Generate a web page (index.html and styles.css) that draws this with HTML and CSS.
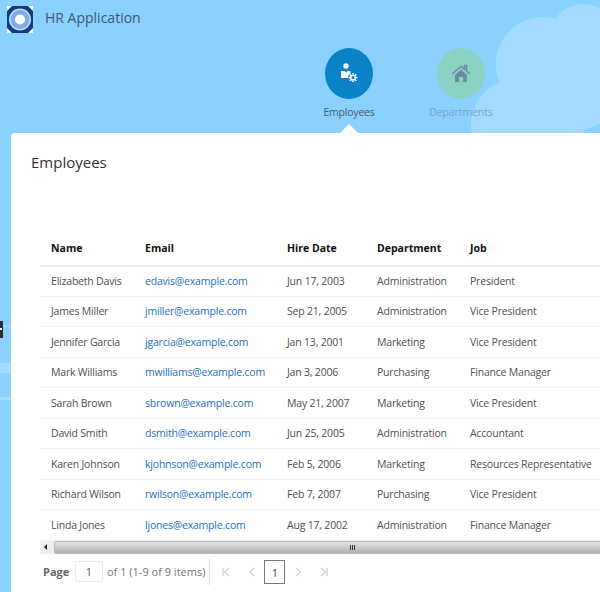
FILE: index.html
```html
<!DOCTYPE html>
<html lang="en">
<head>
<meta charset="utf-8">
<title>HR Application</title>
<link rel="stylesheet" href="styles.css">
</head>
<body>
<div class="sky">
  <svg class="clouds" width="600" height="592" viewBox="0 0 600 592" aria-hidden="true">
    <circle cx="543" cy="64" r="47" fill="#a5daff"/>
    <circle cx="583" cy="37" r="33" fill="#a5daff"/>
    <circle cx="575" cy="80" r="50" fill="#a5daff"/>
    <circle cx="517" cy="125" r="46" fill="#a5daff"/>
    <circle cx="550" cy="110" r="40" fill="#a5daff"/>
    <rect x="0" y="325" width="11" height="2" fill="#a0d9ff"/>
    <rect x="0" y="363" width="11" height="10" fill="#a5daff"/>
    <rect x="0" y="397" width="11" height="3" fill="#a5daff"/>
  </svg>
  <span class="handle"></span>
  <header class="brand">
    <svg class="logo" width="26" height="27" viewBox="0 0 26 27" aria-hidden="true">
      <rect width="26" height="27" fill="#fff"/>
      <path d="M5 0H21L26 5V22L21 27H5L0 22V5Z" fill="#0b3f82"/>
      <circle cx="13" cy="13.5" r="12" fill="#0b3f82"/>
      <circle cx="13" cy="13.5" r="11" fill="#c5d8ee"/>
      <circle cx="13" cy="13.5" r="9.5" fill="#7eaee8"/>
      <circle cx="13" cy="13.5" r="5" fill="#fff"/>
    </svg>
    <span class="brand-name">HR Application</span>
  </header>
  <nav class="tabs">
    <a class="tab tab-active">
      <span class="disc disc-blue">
        <svg width="22" height="22" viewBox="0 0 22 22" aria-hidden="true">
          <circle cx="8" cy="3" r="2.7" fill="#fff"/>
          <path d="M3 8H6.5L8 9.5L9.5 8H12.5V10.5A4.5 4.5 0 0 0 10 15H3Z" fill="#fff"/>
          <g fill="none" stroke="#fff">
            <circle cx="15" cy="14.5" r="2.3" stroke-width="1.6"/>
            <path d="M15 10V11.5M15 17.5V19M10.5 14.5H12M18 14.5H19.5M11.8 11.3L12.9 12.4M17.1 16.6L18.2 17.7M18.2 11.3L17.1 12.4M12.9 16.6L11.8 17.7" stroke-width="1.5"/>
          </g>
        </svg>
      </span>
      <span class="tab-label">Employees</span>
    </a>
    <a class="tab tab-muted">
      <span class="disc disc-green">
        <svg width="20" height="20" viewBox="0 0 20 20" aria-hidden="true">
          <path d="M1 10L10 2.5L13.5 5.4V1.5H15.5V7L19 10" fill="none" stroke="#6e8ea8" stroke-width="1.6"/>
          <path d="M4 11L10 5.5L16 11V18H12V13H8V18H4Z" fill="#6e8ea8"/>
        </svg>
      </span>
      <span class="tab-label">Departments</span>
    </a>
  </nav>
  <main class="card">
    <h1 class="title">Employees</h1>
    <table class="grid">
      <thead>
        <tr><th>Name</th><th>Email</th><th>Hire Date</th><th>Department</th><th>Job</th></tr>
      </thead>
      <tbody>
        <tr><td>Elizabeth Davis</td><td><a>edavis@example.com</a></td><td>Jun 17, 2003</td><td>Administration</td><td>President</td></tr>
        <tr><td>James Miller</td><td><a>jmiller@example.com</a></td><td>Sep 21, 2005</td><td>Administration</td><td>Vice President</td></tr>
        <tr><td>Jennifer Garcia</td><td><a>jgarcia@example.com</a></td><td>Jan 13, 2001</td><td>Marketing</td><td>Vice President</td></tr>
        <tr><td>Mark Williams</td><td><a>mwilliams@example.com</a></td><td>Jan 3, 2006</td><td>Purchasing</td><td>Finance Manager</td></tr>
        <tr><td>Sarah Brown</td><td><a>sbrown@example.com</a></td><td>May 21, 2007</td><td>Marketing</td><td>Vice President</td></tr>
        <tr><td>David Smith</td><td><a>dsmith@example.com</a></td><td>Jun 25, 2005</td><td>Administration</td><td>Accountant</td></tr>
        <tr><td>Karen Johnson</td><td><a>kjohnson@example.com</a></td><td>Feb 5, 2006</td><td>Marketing</td><td>Resources Representative</td></tr>
        <tr><td>Richard Wilson</td><td><a>rwilson@example.com</a></td><td>Feb 7, 2007</td><td>Purchasing</td><td>Vice President</td></tr>
        <tr><td>Linda Jones</td><td><a>ljones@example.com</a></td><td>Aug 17, 2002</td><td>Administration</td><td>Finance Manager</td></tr>
      </tbody>
    </table>
    <div class="scrollbar">
      <span class="arrow"></span>
      <span class="thumb"><span class="grip"></span></span>
    </div>
    <div class="pager">
      <b class="page-label">Page</b>
      <span class="page-input">1</span>
      <span class="page-of">of 1 (1-9 of 9 items)</span>
      <span class="pager-nav">
        <svg class="chev" width="10" height="10" viewBox="0 0 10 10" aria-hidden="true"><path d="M2 1V9M8 1L3.5 5L8 9" /></svg>
        <svg class="chev" width="10" height="10" viewBox="0 0 10 10" aria-hidden="true"><path d="M7 1L2.5 5L7 9" /></svg>
        <span class="page-current">1</span>
        <svg class="chev" width="10" height="10" viewBox="0 0 10 10" aria-hidden="true"><path d="M3 1L7.5 5L3 9" /></svg>
        <svg class="chev" width="10" height="10" viewBox="0 0 10 10" aria-hidden="true"><path d="M8 1V9M2 1L6.5 5L2 9" /></svg>
      </span>
    </div>
  </main>
</div>
</body>
</html>
```
FILE: styles.css
```css
* { box-sizing: border-box; }
html, body { margin: 0; height: 100%; overflow: hidden; }
body { font-family: "Open Sans", "Noto Sans", sans-serif; color: #505050; }
.sky { position: relative; width: 600px; height: 592px; background: #8ad1ff; overflow: hidden; display: flex; flex-direction: column; }
.clouds { position: absolute; left: 0; top: 0; }
.handle { position: absolute; left: 0; top: 321px; width: 3px; height: 17px; background: #2b2f33; }
.handle::after { content: ""; position: absolute; left: 0; top: 7px; width: 2px; height: 2px; background: #fff; }
.brand { position: relative; display: flex; align-items: center; height: 32px; margin-top: 6px; padding-left: 7px; gap: 12px; }
.logo { display: block; margin-bottom: 5px; }
.brand-name { font-size: 14px; color: #45566a; margin-bottom: 9px; }
.tabs { position: relative; display: flex; height: 85px; padding-left: 316px; gap: 46px; margin-top: 10px; }
.tab { width: 66px; display: flex; flex-direction: column; align-items: center; position: relative; }
.tab-active::after { content: ""; position: absolute; left: 24px; bottom: 0; border: 9px solid transparent; border-top: 0; border-bottom-color: #fff; }
.disc { width: 48px; height: 51px; border-radius: 50%; display: flex; align-items: center; justify-content: center; }
.disc-blue { background: #0b82c8; }
.disc-green { background: #8cd2c3; }
.tab-label { margin-top: 6px; font-size: 10.5px; letter-spacing: -0.2px; white-space: nowrap; color: #4a5d6e; }
.tab-muted .tab-label { color: #74a3c4; letter-spacing: -0.1px; }
.card { position: relative; flex: 1; margin-left: 11px; background: #fff; border-radius: 4px 0 0 0; padding: 18px 0 0 29px; overflow: hidden; }
.title { margin: 0 0 59px -9px; font-size: 15px; font-weight: 400; line-height: 22px; color: #333; }
.grid { border-collapse: collapse; table-layout: fixed; width: 610px; font-size: 10.5px; letter-spacing: -0.2px; }
.grid th:nth-child(1) { width: 94px; }
.grid th:nth-child(2) { width: 142px; }
.grid th:nth-child(3) { width: 90px; }
.grid th:nth-child(4) { width: 93px; }
.grid th { text-align: left; font-weight: 700; color: #111; height: 33.5px; padding: 0 0 0 11px; border-bottom: 2px solid #eef2f4; letter-spacing: 0; }
.grid td { height: 30.5px; padding: 0 0 0 11px; border-bottom: 1px solid #eef2f4; white-space: nowrap; }
.grid a { color: #1f6fbf; }
.scrollbar { display: flex; width: 610px; height: 13px; background: #eee; }
.arrow { width: 14px; position: relative; }
.arrow::after { content: ""; position: absolute; left: 4px; top: 3px; border: 3px solid transparent; border-left: 0; border-right-color: #222; }
.thumb { flex: 1; height: 13px; border: 1px solid #bbb; border-radius: 2px; background: linear-gradient(#e4e4e4, #b0b0b0); display: flex; justify-content: center; align-items: center; }
.grip { width: 5px; height: 5px; background: repeating-linear-gradient(90deg, #333 0 1px, transparent 1px 2px); }
.pager { display: flex; align-items: center; height: 36px; font-size: 11px; color: #777; }
.page-label { width: 32px; margin-left: 3px; color: #666; }
.page-input { width: 28px; height: 21px; border: 1px solid #e4ecf2; border-radius: 2px; text-align: center; line-height: 19px; color: #555; }
.page-of { margin-left: 4px; padding-right: 4px; border-right: 1px solid #d4dfe8; height: 26px; line-height: 25px; }
.pager-nav { display: flex; align-items: center; gap: 16px; margin-left: 11px; }
.chev { fill: none; stroke: #cfd6dc; stroke-width: 1.4; }
.page-current { width: 21px; height: 24px; margin: 0 -8px 0 -9px; border: 1px solid #777; text-align: center; line-height: 23px; color: #444; }
```
